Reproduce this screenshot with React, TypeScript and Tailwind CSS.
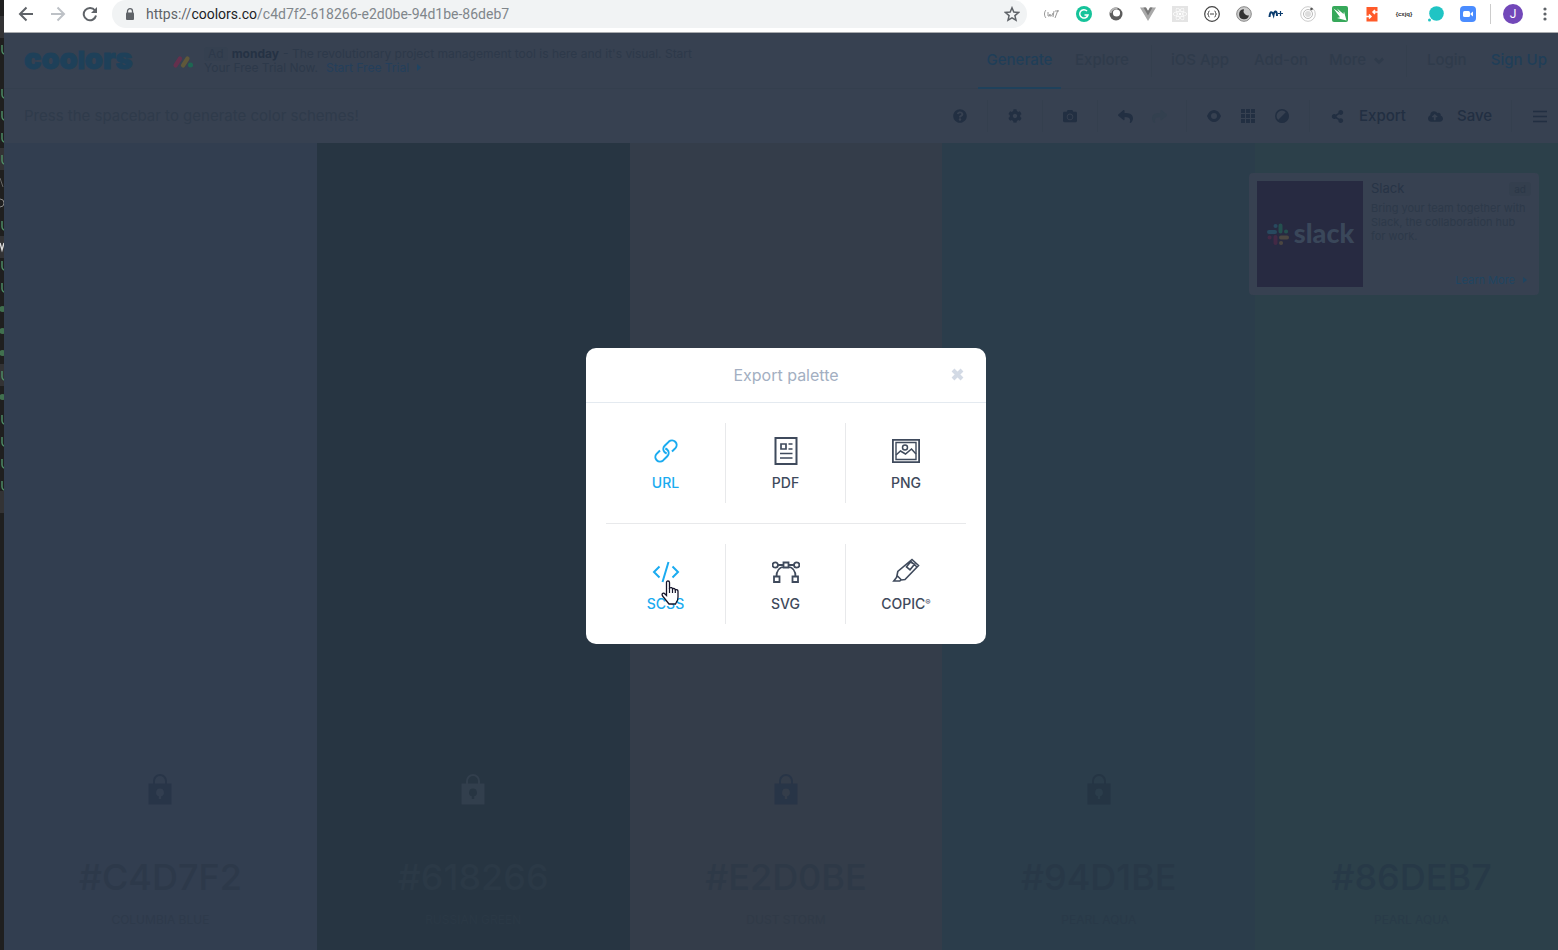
import React from "react";
import { FaQuestionCircle, FaCog, FaCamera, FaReply, FaShare, FaShareAlt, FaCloudUploadAlt, FaReact } from "react-icons/fa";

type Swatch = { hex: string; name: string; bg: string; text: string; sub: string; lock: string };

const swatches: Swatch[] = [
  { hex: "#C4D7F2", name: "COLUMBIA BLUE", bg: "bg-[#323e50]", text: "text-[#2d394a]", sub: "text-[#2e3a4b]", lock: "text-[#283548]" },
  { hex: "#618266", name: "RUSSIAN GREEN", bg: "bg-[#273542]", text: "text-[#2b3946]", sub: "text-[#2a3845]", lock: "text-[#323f4d]" },
  { hex: "#E2D0BE", name: "DUST STORM", bg: "bg-[#343d4a]", text: "text-[#2e3947]", sub: "text-[#303a47]", lock: "text-[#283547]" },
  { hex: "#94D1BE", name: "PEARL AQUA", bg: "bg-[#2b3d4b]", text: "text-[#283847]", sub: "text-[#293948]", lock: "text-[#253544]" },
  { hex: "#86DEB7", name: "PEARL AQUA", bg: "bg-[#2c404a]", text: "text-[#273947]", sub: "text-[#293b48]", lock: "text-transparent" },
];

function EditorEdge() {
  const marks = [45, 89, 111, 133, 155, 221, 261, 283, 371, 415, 437, 459, 481];
  const dots = [309, 331, 353, 397];
  return (
    <svg className="h-full w-1 shrink-0" aria-hidden="true">
      <rect width="4" height="1000" fill="#1f1f1f" />
      {[16, 148, 236, 364, 491].map((y) => (
        <rect key={y} y={y} width="4" height="22" fill="#333335" />
      ))}
      {marks.map((y) => (
        <path key={y} d={`M2 ${y}v6q0 2 2 3`} stroke="#4f8f68" strokeWidth="1.4" fill="none" />
      ))}
      {dots.map((y) => (
        <circle key={y} cx="2.5" cy={y} r="3" fill="#41704f" />
      ))}
      <path d="M0 178l3 9" stroke="#666" />
      <path d="M0 199q4 0 4 4t-4 4" stroke="#888" fill="none" />
      <path d="M0 243l2 7 2-7" stroke="#ddd" strokeWidth="1.4" fill="none" />
    </svg>
  );
}

function Ext({ label, children }: { label: string; children: React.ReactNode }) {
  return (
    <button aria-label={label} className="flex size-4 shrink-0 items-center justify-center">
      <svg viewBox="0 0 16 16" className="size-4 overflow-visible">{children}</svg>
    </button>
  );
}

function BrowserBar() {
  return (
    <div className="flex h-[33px] shrink-0 items-start border-b border-[#a9abae] bg-white">
      <div className="flex h-7 w-full items-center">
        <div className="flex w-[108px] shrink-0 items-center gap-4 pl-[14px] text-[#5f6368]">
          <button aria-label="Back">
            <svg className="size-4" viewBox="0 0 16 16" fill="none" stroke="currentColor" strokeWidth="2"><path d="M15 8H2M8.500 1.500 2 8l6.500 6.500" /></svg>
          </button>
          <button aria-label="Forward" className="text-[#bdc1c6]">
            <svg className="size-4" viewBox="0 0 16 16" fill="none" stroke="currentColor" strokeWidth="2"><path d="M1 8h13M7.500 1.500 14 8l-6.500 6.500" /></svg>
          </button>
          <button aria-label="Reload">
            <svg className="size-4" viewBox="0 0 16 16"><path d="M13 4.500A6.200 6.200 0 1 0 14 9.500" fill="none" stroke="currentColor" strokeWidth="2" /><path d="M15 1v6H9z" fill="currentColor" /></svg>
          </button>
        </div>
        <div className="flex h-7 min-w-0 flex-1 items-center rounded-full bg-[#f1f3f4] pr-[7px] pl-[13px]">
          <svg className="mr-[11px] h-3 w-[10px] shrink-0" viewBox="0 0 10 12" aria-hidden="true"><path d="M2.500 5V3.200a2.500 2.500 0 0 1 5 0V5" fill="none" stroke="#5f6368" strokeWidth="1.300" /><rect x="1" y="4.500" width="8" height="7.500" rx="1" fill="#5f6368" /></svg>
          <a href="https://coolors.co/c4d7f2-618266-e2d0be-94d1be-86deb7" className="flex-1 truncate font-['Roboto',sans-serif] text-sm text-[#80868b]">
            <span className="text-[#5f6368]">https://</span><span className="text-[#202124]">coolors.co</span>/c4d7f2-618266-e2d0be-94d1be-86deb7
          </a>
          <button aria-label="Bookmark this page">
            <svg className="size-4" viewBox="0 0 16 16" fill="none" stroke="#5f6368" strokeWidth="1.500"><path d="M8 1.800l1.800 4.300 4.700.4-3.600 3.100 1.100 4.600L8 11.800l-4 2.400 1.100-4.600L1.500 6.500l4.700-.4z" /></svg>
          </button>
        </div>
        <div className="flex shrink-0 items-center gap-4 pl-[17px]">
          <Ext label="Script tool"><g fill="none" stroke="#999" strokeWidth="1"><path d="M2 4C0 6 0 10 2 12M14 4l-3 8M4 6v4q2 1 2-2v2q2 1 3-3M10 5l-1 6M11 5h4" /></g></Ext>
          <Ext label="Grammarly"><circle cx="8" cy="8" r="8" fill="#15c39a" /><path d="M11 5a4.200 4.200 0 1 0 1 4H8.500" fill="none" stroke="#fff" strokeWidth="1.500" /></Ext>
          <Ext label="Lens"><circle cx="8" cy="8" r="6.500" fill="#5c5c5c" /><path d="M2.500 7a5.500 5.500 0 0 1 7-4.500" fill="none" stroke="#b5b5b5" strokeWidth="2" /><circle cx="8.500" cy="7" r="3.600" fill="#fff" /></Ext>
          <Ext label="Vue devtools"><path d="M0 1.500h6l2 3.500 2-3.500h6L8 15z" fill="#a9a9a9" /><path d="M3.500 1.500H6l2 3.500 2-3.500h2.500L8 9.500z" fill="#777" /></Ext>
          <Ext label="React devtools"><rect width="16" height="16" fill="#e4e4e4" /><FaReact x="1" y="1" size={14} color="#fff" /></Ext>
          <Ext label="JSON viewer"><circle cx="8" cy="8" r="7.300" fill="#fff" stroke="#444" strokeWidth="1.200" /><path d="M5.500 5q-1 0-1 1.500T3.500 8q1 0 1 1.500t1 1.500M10.500 5q1 0 1 1.500t1 1.500q-1 0-1 1.500t-1 1.500M6 8h4" fill="none" stroke="#444" /></Ext>
          <Ext label="Dark mode"><circle cx="8" cy="8" r="7.300" fill="#ccc" stroke="#888" /><path d="M8 3.200a5 5 0 1 0 5 6A4.300 4.300 0 0 1 8 3.200z" fill="#333" /></Ext>
          <Ext label="Movistar"><path d="M1.500 11C2 5 4 5 5.500 9 6.500 4 9 4.500 9 10" fill="none" stroke="#0b3c6e" strokeWidth="2" /><path d="M12.500 5v5M10 7.500h5" stroke="#0b3c6e" strokeWidth="1.200" /></Ext>
          <Ext label="Orbit"><circle cx="8" cy="8" r="7.300" fill="none" stroke="#ccc" /><circle cx="8" cy="8" r="4.500" fill="none" stroke="#bbb" /><circle cx="8" cy="8" r="3" fill="#ddd" /><circle cx="11.500" cy="3" r="1.300" fill="#555" /></Ext>
          <Ext label="Swift"><rect width="16" height="16" rx="2" fill="#36a85a" /><path d="M1.500 2.500 8 7 5 2.500 11.500 8 12 5.500 14.500 14.500 5 12l3-.8z" fill="#fff" /></Ext>
          <Ext label="Redirect"><rect x="2.500" y="1" width="11" height="14.500" fill="#ff5a29" /><path d="M14 6H9.500M11 4 9 6l2 2M2 10.500h4.500M5 8.500l2 2-2 2" fill="none" stroke="#fff" strokeWidth="1.500" /></Ext>
          <Ext label="Query tool"><text x="8" y="10" textAnchor="middle" fontSize="6" fontFamily="Liberation Sans" fontWeight="700" fill="#333">{"{cxjq}"}</text></Ext>
          <Ext label="Chat"><circle cx="8.500" cy="7.500" r="7.300" fill="#20c4c4" /><circle cx="1.500" cy="14" r="1.500" fill="#20c4c4" /></Ext>
          <Ext label="Zoom"><rect width="16" height="16" rx="4" fill="#4a8cff" /><rect x="3" y="5" width="7" height="6" rx="1.500" fill="#fff" /><path d="M10.500 7.500 13 5.500v5l-2.500-2z" fill="#fff" /></Ext>
        </div>
        <div className="ml-[14px] flex w-[78px] shrink-0 items-center border-l border-[#ccc] pl-3">
          <button className="flex size-5 items-center justify-center rounded-full bg-[#7248b9] font-['Roboto',sans-serif] text-xs text-white">J</button>
          <button aria-label="Browser menu" className="ml-[20px]">
            <svg className="h-4 w-1" viewBox="0 0 4 16" fill="#5f6368"><circle cx="2" cy="3" r="1.600" /><circle cx="2" cy="8" r="1.600" /><circle cx="2" cy="13" r="1.600" /></svg>
          </button>
        </div>
      </div>
    </div>
  );
}

function Rule() {
  return <span className="h-8 w-px shrink-0 bg-[#343f4e]" />;
}

function TopNav() {
  return (
    <header className="flex h-[56px] shrink-0 items-stretch border-b border-[#343f4e] pr-[21px] pl-5">
      <a href="#home" className="flex w-[148px] shrink-0 items-center pb-1 text-[29px] leading-none font-black text-[#1e4059] [-webkit-text-stroke:1px_#1e4059]">
        <span>coo<span className="text-2xl leading-none">l</span>ors</span>
      </a>
      <a href="#monday" className="flex min-w-0 items-center">
        <svg className="mr-2 size-6 shrink-0" viewBox="0 0 24 24" aria-hidden="true">
          <path d="M3.500 16.500 8 9.500" stroke="#64304d" strokeWidth="4.200" strokeLinecap="round" />
          <path d="M11 16.500 15.500 9.500" stroke="#5f583a" strokeWidth="4.200" strokeLinecap="round" />
          <circle cx="18.500" cy="16" r="2.500" fill="#1e6652" />
        </svg>
        <div className="text-xs leading-[14px] whitespace-nowrap text-[#2d394a]">
          <div className="flex items-center gap-1">
            <span className="rounded-sm bg-[#354050] px-1">Ad</span>
            <b className="text-[#253244]">monday</b>
            <span>- The revolutionary project management tool is here and it's visual. Start</span>
          </div>
          <div className="flex items-center gap-2">
            <span>Your Free Trial Now.</span>
            <span className="text-[#243f5b]">Start Free Trial</span>
            <svg className="h-[7px] w-1" viewBox="0 0 4 7"><path d="M0 0l4 3.500L0 7z" fill="#1f4462" /></svg>
          </div>
        </div>
      </a>
      <nav className="ml-auto flex shrink-0 items-center text-[15px] font-medium text-[#2f3b4b]">
        <a href="#generate" className="-mb-px flex h-[56px] w-[83px] items-center justify-center self-start border-b-2 border-[#1f415b] text-[#1f3e58]">Generate</a>
        <a href="#explore" className="flex w-[90px] justify-center pr-2">Explore</a>
        <Rule />
        <a href="#ios" className="w-[102px] pl-[19px]">iOS App</a>
        <a href="#addon" className="w-[75px]">Add-on</a>
        <button className="flex w-[77px] items-center gap-2">
          More
          <svg className="h-2 w-[10px]" viewBox="0 0 10 8" fill="none" stroke="currentColor" strokeWidth="2.500"><path d="M1 1.500l4 4 4-4" /></svg>
        </button>
        <Rule />
        <a href="#login" className="w-[82px] pl-5">Login</a>
        <a href="#signup" className="w-[58px] text-right whitespace-nowrap text-[#1f3e58]">Sign Up</a>
      </nav>
    </header>
  );
}

function Tool({ label, children, wide, dim }: { label: string; children: React.ReactNode; wide?: boolean; dim?: boolean }) {
  return (
    <button aria-label={label} className={`flex h-8 shrink-0 items-center justify-center ${wide ? "w-[54px]" : "w-[34px]"} ${dim ? "text-[#33404f]" : ""}`}>
      {children}
    </button>
  );
}

function Toolbar() {
  return (
    <div className="flex h-[54px] shrink-0 items-center pr-[21px] pl-5">
      <p className="text-[15px] text-[#2f3b4b]">Press the spacebar to generate color schemes!</p>
      <div className="ml-auto flex items-center text-[15px] font-medium text-[#222f42]">
        <Tool label="Help" wide><FaQuestionCircle size={14} /></Tool>
        <Rule />
        <Tool label="Settings" wide><FaCog size={14} /></Tool>
        <Rule />
        <Tool label="Camera" wide><FaCamera size={14} /></Tool>
        <Rule />
        <span className="flex w-[88px] justify-center">
          <Tool label="Undo"><FaReply size={15} /></Tool>
          <Tool label="Redo" dim><FaShare size={15} /></Tool>
        </span>
        <Rule />
        <span className="flex w-[122px] justify-center">
          <Tool label="View"><svg className="h-3 w-[14px]" viewBox="0 0 14 12"><path fill="currentColor" fillRule="evenodd" d="M0 6c3-8 11-8 14 0-3 8-11 8-14 0zm7-3a3 3 0 1 0 0 6 3 3 0 0 0 0-6z" /></svg></Tool>
          <Tool label="Grid"><svg className="size-[14px]" viewBox="0 0 14 14" fill="currentColor">{[0, 5, 10].map((y) => [0, 5, 10].map((x) => <rect key={`${x}${y}`} x={x} y={y} width="4" height="4" />))}</svg></Tool>
          <Tool label="Contrast"><svg className="size-[14px]" viewBox="0 0 14 14"><circle cx="7" cy="7" r="6.200" fill="none" stroke="currentColor" strokeWidth="1.500" /><path d="M11.700 2.300A6.600 6.600 0 0 1 2.300 11.700z" fill="currentColor" /></svg></Tool>
        </span>
        <Rule />
        <button className="flex w-[118px] items-center gap-[15px] pl-[21px]"><FaShareAlt size={13} />Export</button>
        <button className="flex w-[83px] items-center gap-[14px]"><FaCloudUploadAlt size={15} />Save</button>
        <Rule />
        <button aria-label="Menu" className="flex w-[35px] justify-end"><svg className="h-[13px] w-[14px]" viewBox="0 0 14 13" stroke="currentColor" strokeWidth="1.500"><path d="M0 1.500h14M0 6.500h14M0 11.500h14" /></svg></button>
      </div>
    </div>
  );
}

function Palette() {
  return (
    <main className="relative grid min-h-0 flex-1 grid-cols-5">
      {swatches.map((s) => (
        <section key={s.hex} className={`flex flex-col items-center justify-end pb-[31px] ${s.bg}`}>
          <svg className={`mb-[52px] h-[31px] w-6 ${s.lock}`} viewBox="0 0 24 31" aria-hidden="true">
            <path d="M6 10V7a6 6 0 0 1 12 0v3" fill="none" stroke="currentColor" strokeWidth="2" />
            <path fill="currentColor" fillRule="evenodd" d="M.5 9.500h23v21H.5zM12 14.500a4 4 0 0 0-1.200 7.800V25h2.400v-2.700A4 4 0 0 0 12 14.500z" />
          </svg>
          <h2 className={`text-4xl leading-10 font-medium ${s.text}`}>{s.hex}</h2>
          <p className={`mt-[15px] text-xs leading-4 ${s.sub}`}>{s.name}</p>
        </section>
      ))}
      <aside className="absolute top-[30px] right-[29px] flex h-[122px] w-[290px] gap-2 rounded bg-[#374151] p-2">
        <div className="flex w-[106px] shrink-0 items-center justify-center gap-1 bg-[#272a41]">
          <svg className="size-6" viewBox="0 0 24 24" strokeWidth="4" strokeLinecap="round" aria-hidden="true">
            <path d="M3 10h6M9.500 4h.1" stroke="#28495f" />
            <path d="M14.500 3.500v6M20 9.500h.1" stroke="#24504f" />
            <path d="M15 15.500h6M15 21h.1" stroke="#4b4641" />
            <path d="M9.500 15v6M3.500 15.500h.1" stroke="#432945" />
          </svg>
          <span className="pb-1 font-['Lato',sans-serif] text-[27px] leading-none font-black text-[#3a475a]">slack</span>
        </div>
        <div className="flex min-w-0 flex-1 flex-col">
          <div className="flex h-4 items-center justify-between">
            <h3 className="text-[13px] text-[#273446]">Slack</h3>
            <span className="rounded-sm bg-[#343f4e] px-[5px] text-[10px] leading-[14px] text-[#2b3747]">ad</span>
          </div>
          <p className="mt-1 text-[11px] leading-[14px] text-[#2d3949]">Bring your team together with Slack, the collaboration hub for work.</p>
          <a href="#slack" className="mt-auto flex items-center justify-end gap-2 pr-1 text-[11px] leading-[14px] text-[#1f4561]">
            Learn More
            <svg className="h-[6px] w-1" viewBox="0 0 4 6"><path d="M0 0l4 3-4 3z" fill="currentColor" /></svg>
          </a>
        </div>
      </aside>
    </main>
  );
}

const icons: Record<string, React.ReactNode> = {
  URL: <g strokeWidth="2"><path d="M20 14.500l3.400-3.400a4.600 4.600 0 0 0-6.500-6.500l-4.200 4.200a4.600 4.600 0 0 0 0 6.500q.8.8 2 1.200" /><path d="M8 13.500l-3.400 3.400a4.600 4.600 0 0 0 6.500 6.500l4.200-4.200a4.600 4.600 0 0 0 0-6.500q-.8-.8-2-1.200" /></g>,
  PDF: <g><path d="M3.500 1h21v26h-21z" strokeWidth="2" /><path d="M9 7h5v5H9zM16.500 7h4M16.500 12h4M8 16.500h12.500M8 21h12.500" strokeWidth="1.700" /></g>,
  PNG: <g><path d="M.9 2.900h26.200v22.200H.9z" strokeWidth="1.800" /><path d="M4 5.500h20v17H4z" strokeWidth="1.400" /><circle cx="13" cy="10.500" r="2.500" strokeWidth="1.500" /><path d="M4 18l4.500-4 5 3 6-5 4.500 5" strokeWidth="1.500" /></g>,
  SCSS: <g strokeWidth="2"><path d="M7.500 8.500 2 14l5.500 5.500M20.500 8.500 26 14l-5.500 5.500M16.500 4l-6 20" /></g>,
  SVG: <g strokeWidth="1.800"><circle cx="3.300" cy="7" r="2.700" /><circle cx="24.700" cy="7" r="2.700" /><path d="M11.500 4.500h5v5h-5zM2 18.500h5.500V24H2zM20.500 18.500H26V24h-5.500zM6 7h5.500M16.500 7H22M4.500 18.500c0-6 3-9 7-10M23.500 18.500c0-6-3-9-7-10" /></g>,
  COPIC: <g strokeWidth="1.600"><path d="M20 1.500 26.500 7.500 13 21.500l-3.500.5-4.500-4.500.8-4zM5 17.500l-.5 2L1.800 23h6l1.700-1.500M18.500 4l-4 4.800 3.500 3 4.500-5.500zM18.500 3l6.500 6" /></g>,
};

function ExportDialog() {
  const options = ["URL", "PDF", "PNG", "SCSS", "SVG", "COPIC"];
  return (
    <div className="absolute inset-0 flex items-center justify-center">
      <div role="dialog" aria-labelledby="export-title" className="w-[400px] rounded-[10px] bg-white">
        <div className="relative flex h-[55px] items-center justify-center border-b border-[#e4eaf0]">
          <h1 id="export-title" className="text-base text-[#a3afc2]">Export palette</h1>
          <button aria-label="Close" className="absolute top-5 right-[22px] text-[#d3dae5]">
            <svg className="size-[13px]" viewBox="0 0 13 13" stroke="currentColor" strokeWidth="4"><path d="M2 2l9 9M11 2l-9 9" /></svg>
          </button>
        </div>
        <div className="mx-5 grid grid-cols-3">
          {options.map((o, i) => (
            <div key={o} className={`py-5 ${i < 3 ? "border-b border-[#e8e9eb]" : ""}`}>
              <button className={`flex h-20 w-full flex-col items-center pt-[14px] text-sm font-medium ${i % 3 < 2 ? "border-r border-[#e8e9eb]" : ""} ${i % 3 === 0 ? "text-[#1aabf0]" : "text-[#3f4a5c]"}`}>
                <svg className="mb-2 size-7" viewBox="0 0 28 28" fill="none" stroke="currentColor" aria-hidden="true">{icons[o]}</svg>
                <span className="leading-5">{o}{o === "COPIC" && <sup className="text-[8px]">®</sup>}</span>
              </button>
            </div>
          ))}
        </div>
        <svg className="pointer-events-none absolute top-1/2 left-1/2 mt-[84px] -ml-[125px] h-[25px] w-[18px]" viewBox="0 0 18 25" aria-hidden="true">
          <path d="M5.500 2.500Q5.500 1 7 1t1.500 1.500V8q2.500-1 3 .7 2.300-.7 2.700 1 2.800-.5 2.800 1.800V17q0 3-1.500 5l-1 2H8l-2-2.500-4-5Q.5 14.500 1.500 13.500t2.500.5l1.500 1.500z" fill="#fff" stroke="#15152a" strokeWidth="1.300" />
          <path d="M8.500 8v5M11.500 9v4M14.300 10v3" stroke="#15152a" strokeWidth="1.200" />
        </svg>
      </div>
    </div>
  );
}

export default function App() {
  return (
    <div className="flex h-screen overflow-hidden bg-[#1f1f1f] font-['Inter',sans-serif]">
      <EditorEdge />
      <div className="-mr-[10px] flex h-[calc(100%+9px)] min-w-0 flex-1 flex-col">
        <BrowserBar />
        <div className="relative flex min-h-0 flex-1 flex-col bg-[#374151]">
          <TopNav />
          <Toolbar />
          <Palette />
          <ExportDialog />
        </div>
      </div>
    </div>
  );
}
